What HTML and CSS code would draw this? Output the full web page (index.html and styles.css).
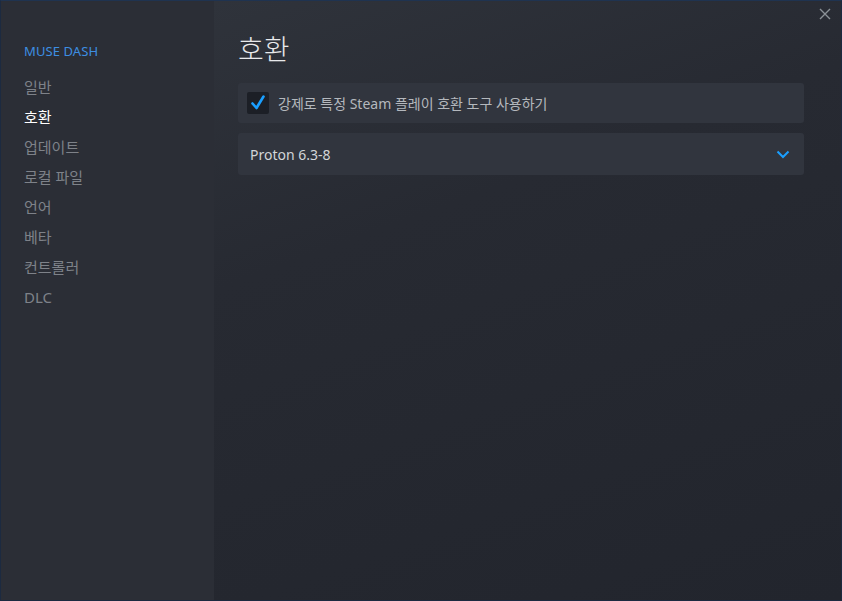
FILE: index.html
```html
<!DOCTYPE html>
<html lang="ko">
<head>
<meta charset="utf-8">
<title>MUSE DASH - 호환</title>
<link rel="stylesheet" href="styles.css">
</head>
<body>
<div class="window">
  <nav class="sidebar">
    <div class="game-title">MUSE DASH</div>
    <ul class="nav">
      <li class="nav-item">일반</li>
      <li class="nav-item active">호환</li>
      <li class="nav-item">업데이트</li>
      <li class="nav-item">로컬 파일</li>
      <li class="nav-item">언어</li>
      <li class="nav-item">베타</li>
      <li class="nav-item">컨트롤러</li>
      <li class="nav-item">DLC</li>
    </ul>
  </nav>
  <main class="content">
    <button class="close" aria-label="닫기">
      <svg width="12" height="12" viewBox="0 0 12 12"><path d="M1 1 L11 11 M11 1 L1 11" stroke="#8b9197" stroke-width="1.4" fill="none"/></svg>
    </button>
    <h1 class="page-title">호환</h1>
    <div class="panel check-row">
      <span class="checkbox">
        <svg width="16" height="16" viewBox="0 0 16 16"><path d="M2.5 8.5 L6.5 13 L13.5 1.5" stroke="#1a9fff" stroke-width="2.6" fill="none" stroke-linecap="round" stroke-linejoin="round"/></svg>
      </span>
      <span class="check-label">강제로 특정 Steam 플레이 호환 도구 사용하기</span>
    </div>
    <div class="panel select-row">
      <span class="select-value">Proton 6.3-8</span>
      <svg class="chevron" width="14" height="9" viewBox="0 0 14 9"><path d="M1.5 1.5 L7 7 L12.5 1.5" stroke="#1a9fff" stroke-width="2" fill="none"/></svg>
    </div>
  </main>
</div>
</body>
</html>
```

FILE: styles.css
```css
* { box-sizing: border-box; }
html, body {
  margin: 0;
  padding: 0;
  width: 842px;
  height: 601px;
  overflow: hidden;
  background: #1b2130;
}
body {
  font-family: "Noto Sans", "Noto Sans CJK KR", sans-serif;
}
.window {
  width: 842px;
  height: 601px;
  display: flex;
  border: 1px solid #1c2a40;
  border-top-color: #1f3350;
}
.sidebar {
  width: 213px;
  flex: none;
  background: #2b2e36;
  padding: 40px 0 0 23px;
}
.game-title {
  color: #3d8ee2;
  font-size: 13px;
  line-height: 20px;
  letter-spacing: 0.1px;
  margin-bottom: 11px;
}
.nav {
  list-style: none;
  margin: 0;
  padding: 0;
}
.nav-item {
  color: #7e8289;
  font-size: 15px;
  line-height: 30px;
  height: 30px;
}
.nav-item.active {
  color: #ffffff;
}
.content {
  flex: 1;
  position: relative;
  background: linear-gradient(160deg, #2f333b 0%, #272a32 35%, #22252d 100%);
  padding: 28px 37px 0 24px;
}
.close {
  position: absolute;
  top: 5px;
  right: 8px;
  width: 16px;
  height: 16px;
  padding: 0;
  border: 0;
  background: none;
  display: flex;
  align-items: center;
  justify-content: center;
}
.page-title {
  margin: 0 0 14px 0;
  color: #e8e9eb;
  font-size: 28px;
  font-weight: 300;
  line-height: 40px;
}
.panel {
  background: #31353e;
  border-radius: 3px;
  display: flex;
  align-items: center;
}
.check-row {
  height: 40px;
  padding-left: 9px;
  margin-bottom: 10px;
}
.checkbox {
  width: 22px;
  height: 22px;
  background: #1c1f26;
  border-radius: 2px;
  display: flex;
  align-items: center;
  justify-content: center;
  margin-right: 9px;
}
.check-label {
  color: #b4b8bd;
  font-size: 14px;
}
.select-row {
  height: 42px;
  padding: 0 14px 0 12px;
  justify-content: space-between;
}
.select-value {
  color: #d3d6d9;
  font-size: 14px;
}
.chevron {
  display: block;
}
```
